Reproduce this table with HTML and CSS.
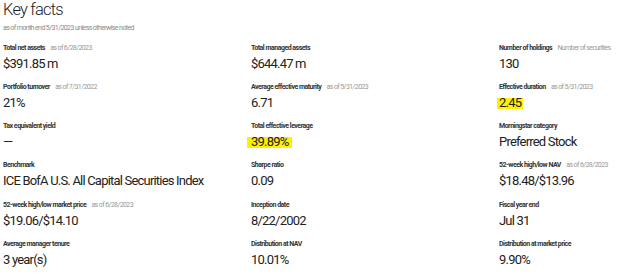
FILE: index.html
```html
<!DOCTYPE html>
<html lang="en">
<head>
<meta charset="utf-8">
<title>Key facts</title>
<link rel="stylesheet" href="styles.css">
</head>
<body>
<section class="facts">
  <h1 class="title">Key facts</h1>
  <p class="subtitle">as of month end 5/31/2023 unless otherwise noted</p>
  <div class="grid">
    <div class="item"><div class="label">Total net assets <span class="asof">as of 6/28/2023</span></div><div class="value">$391.85 m</div></div>
    <div class="item"><div class="label">Total managed assets</div><div class="value">$644.47 m</div></div>
    <div class="item"><div class="label">Number of holdings <span class="asof">Number of securities</span></div><div class="value">130</div></div>

    <div class="item"><div class="label">Portfolio turnover <span class="asof">as of 7/31/2022</span></div><div class="value">21%</div></div>
    <div class="item"><div class="label">Average effective maturity <span class="asof">as of 5/31/2023</span></div><div class="value">6.71</div></div>
    <div class="item"><div class="label">Effective duration <span class="asof">as of 5/31/2023</span></div><div class="value"><span class="hl hl-narrow">2.45</span></div></div>

    <div class="item"><div class="label">Tax equivalent yield</div><div class="value">—</div></div>
    <div class="item"><div class="label">Total effective leverage</div><div class="value"><span class="hl hl-wide">39.89%</span></div></div>
    <div class="item"><div class="label">Morningstar category</div><div class="value">Preferred Stock</div></div>

    <div class="item"><div class="label">Benchmark</div><div class="value">ICE BofA U.S. All Capital Securities Index</div></div>
    <div class="item"><div class="label">Sharpe ratio</div><div class="value">0.09</div></div>
    <div class="item"><div class="label">52-week high/low NAV <span class="asof">as of 6/28/2023</span></div><div class="value">$18.48/$13.96</div></div>

    <div class="item"><div class="label">52-week high/low market price <span class="asof">as of 6/28/2023</span></div><div class="value">$19.06/$14.10</div></div>
    <div class="item"><div class="label">Inception date</div><div class="value">8/22/2002</div></div>
    <div class="item"><div class="label">Fiscal year end</div><div class="value">Jul 31</div></div>

    <div class="item"><div class="label">Average manager tenure</div><div class="value">3 year(s)</div></div>
    <div class="item"><div class="label">Distribution at NAV</div><div class="value">10.01%</div></div>
    <div class="item"><div class="label">Distribution at market price</div><div class="value">9.90%</div></div>
  </div>
</section>
</body>
</html>
```

FILE: styles.css
```css
html, body {
  margin: 0;
  padding: 0;
  background: #ffffff;
  overflow: hidden;
}

body {
  font-family: Roboto, "Liberation Sans", Arial, sans-serif;
  color: #1a1a1a;
}

.facts {
  padding-left: 3px;
  width: 637px;
}

.title {
  margin: 0;
  font-size: 16.5px;
  line-height: 20px;
  font-weight: 300;
  letter-spacing: -0.8px;
  color: #1a1a1a;
}

.subtitle {
  margin: 3px 0 0;
  font-size: 7px;
  line-height: 10px;
  letter-spacing: -0.6px;
  color: #8a8a8a;
}

.grid {
  margin-top: 9.6px;
  display: grid;
  grid-template-columns: 248px 248px 1fr;
  row-gap: 10.3px;
}

.item {
  white-space: nowrap;
}

.label {
  font-size: 7px;
  line-height: 10px;
  font-weight: 700;
  letter-spacing: -0.5px;
  color: #333333;
}

.asof {
  margin-left: 4px;
  font-weight: 400;
  color: #999999;
  letter-spacing: -0.6px;
}

.value {
  margin-top: 3px;
  font-size: 13px;
  line-height: 16px;
  letter-spacing: -0.8px;
  color: #222222;
}

.hl {
  background: linear-gradient(to bottom, transparent 3px, #fff000 3px, #fff000 14px, transparent 14px);
}

.hl-wide {
  padding: 0 4px;
  margin-left: -4px;
}

.hl-narrow {
  padding: 0 2px;
  margin-left: -2px;
}
```
